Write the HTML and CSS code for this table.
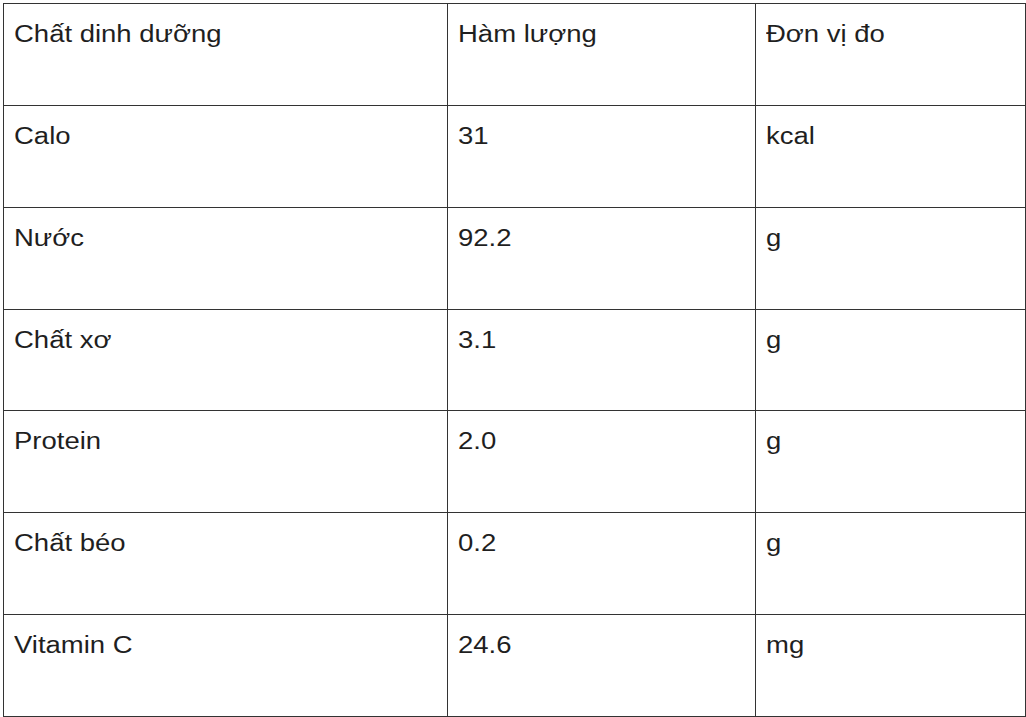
FILE: index.html
```html
<!DOCTYPE html>
<html lang="vi">
<head>
<meta charset="utf-8">
<link rel="stylesheet" href="styles.css">
</head>
<body>
<table class="nutri">
  <colgroup>
    <col class="c1"><col class="c2"><col class="c3">
  </colgroup>
  <tbody>
    <tr><td><span class="t">Chất dinh dưỡng</span></td><td><span class="t">Hàm lượng</span></td><td><span class="t">Đơn vị đo</span></td></tr>
    <tr><td><span class="t">Calo</span></td><td><span class="t">31</span></td><td><span class="t">kcal</span></td></tr>
    <tr><td><span class="t">Nước</span></td><td><span class="t">92.2</span></td><td><span class="t">g</span></td></tr>
    <tr><td><span class="t">Chất xơ</span></td><td><span class="t">3.1</span></td><td><span class="t">g</span></td></tr>
    <tr><td><span class="t">Protein</span></td><td><span class="t">2.0</span></td><td><span class="t">g</span></td></tr>
    <tr><td><span class="t">Chất béo</span></td><td><span class="t">0.2</span></td><td><span class="t">g</span></td></tr>
    <tr><td><span class="t">Vitamin C</span></td><td><span class="t">24.6</span></td><td><span class="t">mg</span></td></tr>
  </tbody>
</table>
</body>
</html>
```

FILE: styles.css
```css
html, body {
  margin: 0;
  padding: 0;
  background: #ffffff;
}
body {
  padding: 3px 0 0 3px;
  font-family: "Liberation Sans", Arial, sans-serif;
  font-size: 23px;
  color: #1f1f1f;
}
.nutri {
  border-collapse: collapse;
  table-layout: fixed;
  width: 1022px;
}
.c1 { width: 444px; }
.c2 { width: 308px; }
.c3 { width: 270px; }
.nutri tr {
  height: 101.86px;
}
.nutri td {
  border: 1px solid #333333;
  vertical-align: top;
  padding: 17px 10px 0 10px;
  line-height: 27px;
}
.t {
  display: inline-block;
  white-space: nowrap;
  transform: scaleX(1.195);
  transform-origin: left center;
}
```
